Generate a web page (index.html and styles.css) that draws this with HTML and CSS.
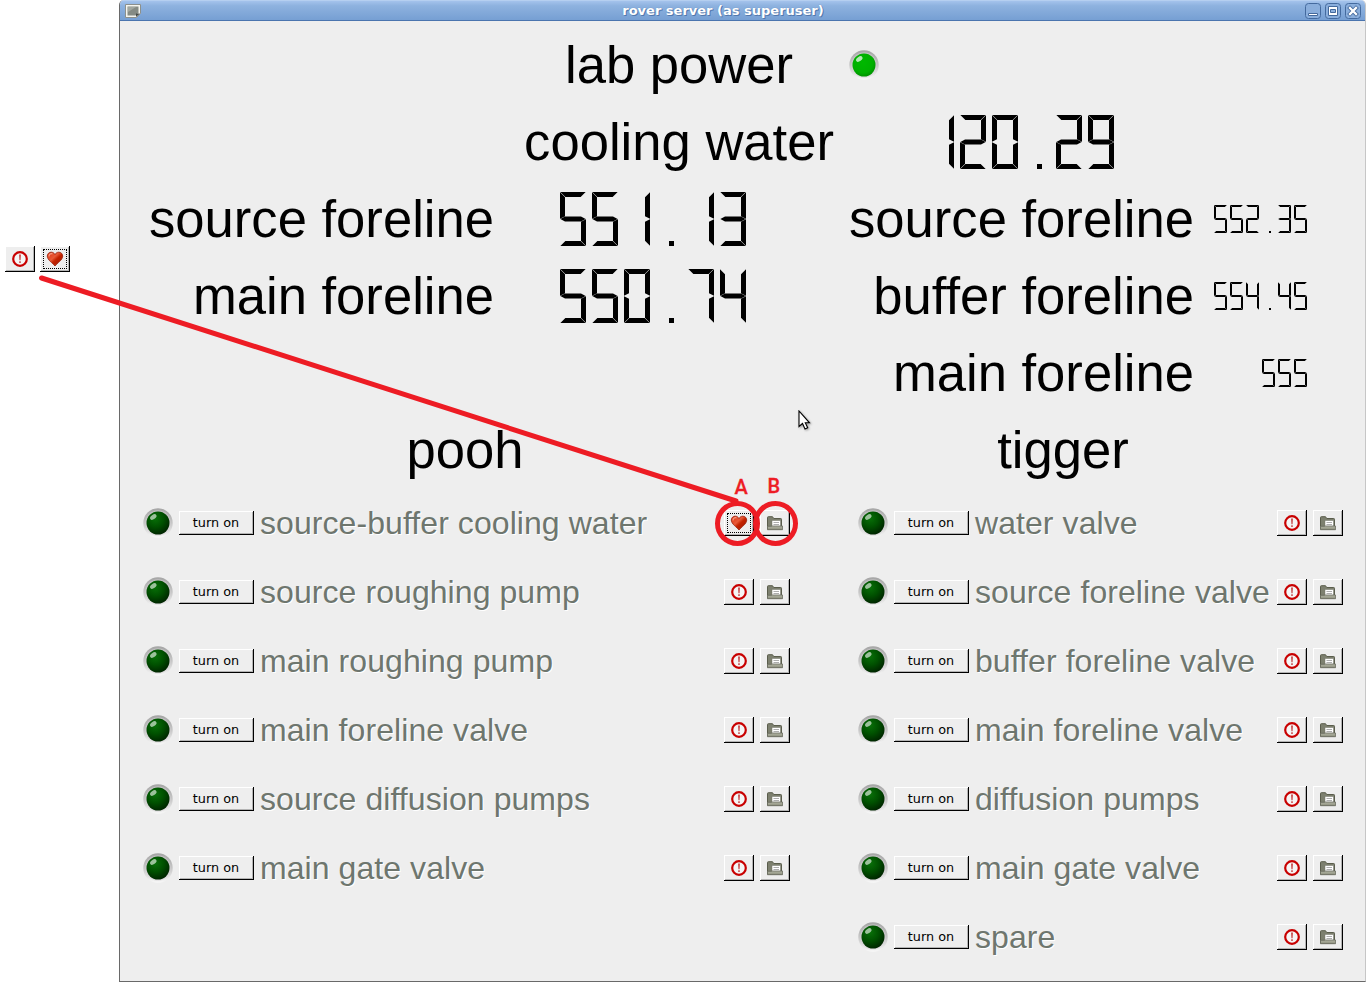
FILE: index.html
```html
<!DOCTYPE html>
<html lang="en">
<head>
<meta charset="utf-8">
<title>rover server</title>
<link rel="stylesheet" href="styles.css">
</head>
<body>
<svg class="defs" width="0" height="0">
  <defs>
    <linearGradient id="rim" x1="0" y1="0" x2="0" y2="1"><stop offset="0" stop-color="#a5a5a5"/><stop offset=".5" stop-color="#c6c6c6"/><stop offset="1" stop-color="#f8f8f8"/></linearGradient>
    <linearGradient id="heartFill" x1="0" y1="0" x2="1" y2="1"><stop offset="0" stop-color="#e03410"/><stop offset=".4" stop-color="#e85a38"/><stop offset=".55" stop-color="#c42300"/><stop offset="1" stop-color="#961400"/></linearGradient>
    <linearGradient id="folderFill" x1="0" y1="0" x2="0" y2="1"><stop offset="0" stop-color="#b4b6a6"/><stop offset="1" stop-color="#8c8f7c"/></linearGradient>
    <radialGradient id="ledOff" cx=".38" cy=".3" r=".75"><stop offset="0" stop-color="#087008"/><stop offset=".5" stop-color="#005000"/><stop offset="1" stop-color="#002200"/></radialGradient>
    <radialGradient id="ledOn" cx=".45" cy=".4" r=".62"><stop offset="0" stop-color="#00b800"/><stop offset=".7" stop-color="#00b000"/><stop offset="1" stop-color="#009000"/></radialGradient>
  </defs>
  <symbol id="alert" viewBox="0 0 16 16"><circle cx="8" cy="8" r="6.8" fill="#f5f5f5" stroke="#c80000" stroke-width="2.2"/><path d="M7 3.600h2l-.4 5.600h-1.200zM7.200 10.300h1.600v1.700H7.200z" fill="#c85050"/></symbol>
  <symbol id="heart" viewBox="0 0 16 16"><path d="M8 15C6 12.300.3 9 .3 5.100.3 2.700 2.100 1.200 4.200 1.200 6 1.200 7.300 2.200 8 3.500 8.700 2.200 10 1.200 11.800 1.200c2.100 0 3.900 1.500 3.900 3.900C15.700 9 10 12.300 8 15z" fill="url(#heartFill)" stroke="#9c2410" stroke-width=".9"/><path d="M2 5.500C2 3 4 2 5.500 3" fill="none" stroke="#f6a088" stroke-width="1.100"/></symbol>
  <symbol id="folder" viewBox="0 0 16 16"><path d="M.5 14V2.500q0-.8.8-.8h4.200L6.700 3.500H13.700q.8 0 .8.800V14z" fill="#7d806f" stroke="#5a5d4c"/><path d="M5 5.500h8.500v6H5z" fill="#fff" stroke="#74776a" stroke-width=".5"/><path d="M6.500 7.500h5.500M6.500 9.500h5.500" stroke="#8b8b8b" stroke-width=".7"/><path d="M.4 14.700V11.300h4.300l.7-.3h10.200v3.700z" fill="url(#folderFill)" stroke="#64675a" stroke-width=".8"/></symbol>
</svg>

<main class="window">
  <header class="titlebar">
    <svg class="app-icon" width="16" height="14" viewBox="0 0 16 14"><path d="M.5.500h15v9l-4 4H.5z" fill="#f5f5ef" stroke="#8c908c"/><path d="M2.500 2.500h11v6l-3 3h-8z" fill="#858b84"/><path d="M3 3h8L3 8z" fill="#a2a7a0"/><path d="M11 13V9.500h4z" fill="#454a47"/></svg>
    <h1 class="title">rover server (as superuser)</h1>
    <div class="controls">
      <svg width="16" height="16" viewBox="0 0 16 16"><rect class="ctl" x=".5" y=".5" width="15" height="15" rx="3"/><path d="M3.500 10.500h9v2h-9z" fill="#fff" stroke="#44699c"/></svg>
      <svg width="16" height="16" viewBox="0 0 16 16"><rect class="ctl" x=".5" y=".5" width="15" height="15" rx="3"/><path d="M3.500 3.500h9v9h-9z" fill="#fff" stroke="#44699c"/><path d="M5.500 6.500h5v3h-5z" fill="#8eb2df" stroke="#44699c"/></svg>
      <svg width="16" height="16" viewBox="0 0 16 16"><rect class="ctl" x=".5" y=".5" width="15" height="15" rx="3"/><path d="M5 5l6 6M11 5l-6 6" stroke="#44699c" stroke-width="4" stroke-linecap="square"/><path d="M5 5l6 6M11 5l-6 6" stroke="#fff" stroke-width="2.300" stroke-linecap="square"/></svg>
    </div>
  </header>

  <section class="readings">
    <div class="shared"><span class="label">lab power</span><span class="indicator" data-led="on"></span></div>
    <div class="shared"><span class="label">cooling water</span><span class="lcd" data-value="120.29"></span></div>
    <div class="pair"><span class="label">source foreline</span><span class="lcd" data-value="551.13"></span><span class="label">source foreline</span><span class="lcd small" data-value="552.35"></span></div>
    <div class="pair"><span class="label">main foreline</span><span class="lcd" data-value="550.74"></span><span class="label">buffer foreline</span><span class="lcd small" data-value="554.45"></span></div>
    <div class="pair"><span></span><span></span><span class="label">main foreline</span><span class="lcd small" data-value="555"></span></div>
    <div class="groups"><span class="label">pooh</span><span class="label">tigger</span></div>
  </section>
  <section class="switches">
    <div class="column pooh" id="pooh"></div>
    <div class="column tigger" id="tigger"></div>
  </section>
</main>

<div class="callout">
  <button class="icon-button"><svg width="16" height="16"><use href="#alert"/></svg></button>
  <button class="icon-button focused"><svg width="18" height="16"><use href="#heart"/></svg></button>
</div>

<svg class="pointer" width="14" height="22" viewBox="0 0 14 22"><path d="M1 1v15.500l3.500-3 2.500 5.500 2.700-1.200-2.400-5h4.200z" fill="#fff" stroke="#000" stroke-width="1.100"/></svg>

<svg class="annotations" width="1366" height="984" viewBox="0 0 1366 984">
  <g fill="none" stroke="#ed1c24" stroke-width="5" stroke-linecap="round">
    <path d="M41.500 278L736 501"/>
    <circle cx="737.500" cy="523.500" r="20"/>
    <circle cx="775.500" cy="523.500" r="20"/>
  </g>
  <text class="mark" x="734.500" y="494">A</text>
  <text class="mark" x="767.500" y="493">B</text>
</svg>
<script src="app.js"></script>
</body>
</html>
```
FILE: styles.css
```css
* { box-sizing: border-box; }
body { margin: 0; width: 1366px; height: 984px; overflow: hidden; background: #fff; position: relative; }
.defs { position: absolute; }
.window { margin-left: 119px; width: 1247px; height: 982px; background: #eee; border: 1px solid #696969; border-top: 0; border-right-color: #c6c6c6; border-radius: 5px 5px 0 0; overflow: hidden; }
.titlebar { height: 21px; display: grid; grid-template-columns: 80px 1fr 80px; align-items: center; padding: 0 4px 2px 5px; background: linear-gradient(#a4c3ec, #8eb2df 25%, #769fd3); border-top: 1px solid #b5cff0; border-bottom: 1px solid #4a74ae; }
.app-icon { display: block; }
.title { margin: 0 40px 0 0; text-align: center; font: bold 13px/19px "DejaVu Sans", sans-serif; color: #fff; text-shadow: 1px 1px 0 #5278ad, 0 0 1px #5278ad; }
.controls { display: flex; gap: 4px; justify-content: flex-end; }
.controls svg { display: block; }
.ctl { fill: #8aaedc; stroke: #446a9e; }
.readings { padding: 5px 0 1px; }
.readings > div { height: 77px; display: grid; align-items: center; }
.shared { grid-template-columns: 714px 1fr; }
.shared .label { text-align: right; }
.shared:nth-child(1) { grid-template-columns: 673px 1fr; }
.shared .indicator { padding-left: 56px; }
.shared .lcd { padding-left: 94px; }
.pair { grid-template-columns: 374px 252px 448px 113px; text-align: right; }
.groups { grid-template-columns: 690px 506px; text-align: center; }
.label { font: 52.6px/77px "Liberation Sans", Arial, sans-serif; font-variant-ligatures: none; color: #000; white-space: nowrap; }
.lcd, .indicator { display: flex; align-items: center; }
.pair .lcd { justify-content: flex-end; }
.lcd svg, .led { display: block; }
.switches { display: grid; grid-template-columns: 715px 1fr; padding-left: 23px; }
.switch { height: 69px; display: flex; align-items: center; }
.pooh .switch { width: 647px; }
.tigger .switch { width: 485px; }
.led { width: 30px; height: 30px; flex: none; }
.switch .led { margin-bottom: 1px; }
.turn { width: 75px; height: 24px; margin: 0 6px 1px; padding: 0 1px 1px 0; flex: none; font: 12.8px/20px "DejaVu Sans", sans-serif; color: #000; }
.turn, .icon-button { background: #eee; border: 0; border-radius: 0; box-shadow: inset -1px -1px #000, inset 1px 1px #fff, inset -2px -2px #b4b4b4; }
.name { flex: 1; font: 32px/69px "Liberation Sans", Arial, sans-serif; font-variant-ligatures: none; letter-spacing: .07px; color: #6e766e; text-shadow: 1px 1px 0 #fff; white-space: nowrap; }
.icon-button { position: relative; width: 30px; height: 26px; padding: 0; display: flex; align-items: center; justify-content: center; flex: none; }
.switch .icon-button { margin-bottom: 1px; }
.icon-button + .icon-button { margin-left: 6px; }
.focused::after { content: ""; position: absolute; inset: 3px; border: 1px dotted #000; }
.callout { position: absolute; left: 5px; top: 246px; display: flex; }
.callout .icon-button + .icon-button { margin-left: 5px; }
.pointer { position: absolute; left: 798px; top: 410px; filter: drop-shadow(1px 1px 1px rgba(0, 0, 0, .35)); }
.annotations { position: absolute; left: 0; top: 0; pointer-events: none; }
.mark { font: 500 20px Roboto, sans-serif; fill: #ed1c24; stroke: #ed1c24; stroke-width: .3; }
```
FILE: app.js
```js
// Each list names the lit segments: a top, b/c right, d bottom, e/f left, g middle.
const segments = { 0: 'abcdef', 1: 'bc', 2: 'abged', 3: 'abgcd', 4: 'fgbc', 5: 'afgcd', 7: 'abc', 9: 'abcdfg' };

function segmentPaths(w, h, t) {
  const m = h / 2, k = t / 2, s = t > 3 ? 0.35 : 0.15;
  return {
    a: `M${s} 0H${w - s}L${w - t - s} ${t}H${t + s}Z`,
    b: `M${w} ${s}V${m - s}L${w - t} ${m - k - s}V${t + s}Z`,
    c: `M${w} ${m + s}V${h - s}L${w - t} ${h - t - s}V${m + k + s}Z`,
    d: `M${s} ${h}H${w - s}L${w - t - s} ${h - t}H${t + s}Z`,
    e: `M0 ${m + s}V${h - s}L${t} ${h - t - s}V${m + k + s}Z`,
    f: `M0 ${s}V${m - s}L${t} ${m - k - s}V${t + s}Z`,
    g: `M${s} ${m}L${t} ${m - k}H${w - t}L${w - s} ${m}L${w - t} ${m + k}H${t}Z`
  };
}

document.querySelectorAll('.lcd').forEach(el => {
  const small = el.classList.contains('small');
  const w = small ? 13 : 26, h = small ? 28 : 54, t = small ? 2 : 5, pitch = small ? 16 : 32;
  const paths = segmentPaths(w, h, t);
  const text = el.dataset.value;
  let body = '';
  [...text].forEach((ch, i) => {
    const x = i * pitch;
    if (ch === '.') body += `<rect x="${x + (w >> 1) + (small ? 1 : 0)}" y="${h - t}" width="${t}" height="${t}"/>`;
    else body += `<path transform="translate(${x} 0)" d="${[...segments[ch]].map(s => paths[s]).join('')}"/>`;
  });
  const width = text.length * pitch - (pitch - w);
  el.innerHTML = `<svg width="${width}" height="${h}" role="img" aria-label="${text}">${body}</svg>`;
});

function led(on) {
  return `<svg class="led" viewBox="0 0 30 30"><circle cx="15" cy="15" r="14.700" fill="url(#rim)"/><circle cx="15" cy="15" r="12.800" fill="#d4d0d4" opacity=".5"/><circle cx="15" cy="15" r="11.500" fill="url(#${on ? 'ledOn' : 'ledOff'})"/><ellipse cx="10.300" cy="9" rx="3.600" ry="2.200" transform="rotate(-35 10.300 9)" fill="#fff" opacity="${on ? .7 : .6}"/></svg>`;
}
document.querySelector('.indicator').innerHTML = led(true);

const switches = {
  pooh: ['source-buffer cooling water', 'source roughing pump', 'main roughing pump', 'main foreline valve', 'source diffusion pumps', 'main gate valve'],
  tigger: ['water valve', 'source foreline valve', 'buffer foreline valve', 'main foreline valve', 'diffusion pumps', 'main gate valve', 'spare']
};
for (const [id, names] of Object.entries(switches)) {
  document.getElementById(id).innerHTML = names.map((name, i) => {
    const marked = id === 'pooh' && i === 0;
    return `<div class="switch">${led(false)}<button class="turn">turn on</button><span class="name">${name}</span>` +
      `<button class="icon-button${marked ? ' focused' : ''}"><svg width="${marked ? 18 : 16}" height="16"><use href="#${marked ? 'heart' : 'alert'}"/></svg></button>` +
      `<button class="icon-button"><svg width="16" height="16"><use href="#folder"/></svg></button></div>`;
  }).join('');
}
```
